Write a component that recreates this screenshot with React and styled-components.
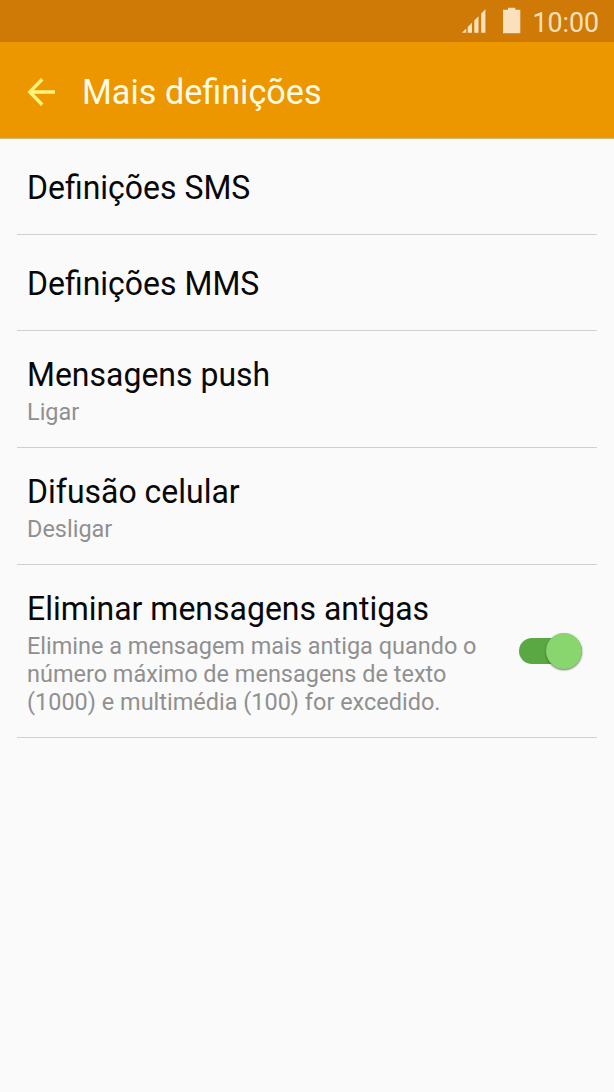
import React from 'react';
import styled, { createGlobalStyle } from 'styled-components';

const Global = createGlobalStyle`
  body { margin: 0; background: #fafafa; }
  * { box-sizing: border-box; }
`;

const Screen = styled.div`
  width: 614px;
  height: 1092px;
  display: flex;
  flex-direction: column;
  overflow: hidden;
  background: #fafafa;
  font-family: Roboto, 'Liberation Sans', sans-serif;
`;

const StatusBar = styled.div`
  flex: none;
  height: 42px;
  padding-right: 15px;
  display: flex;
  justify-content: flex-end;
  background: #cf7a06;
  color: #fae0bd;
`;

const StatusIcons = styled.svg`
  display: block;
  width: 67px;
  height: 42px;
  fill: #fae0bd;
`;

const Clock = styled.span`
  width: 70px;
  font-size: 28px;
  line-height: 45px;
  text-align: right;
  transform: scaleX(0.955);
  transform-origin: right;
`;

const Header = styled.header`
  flex: none;
  height: 97px;
  padding: 3px 0 0 25px;
  display: flex;
  align-items: center;
  background: #ec9600;
  border-bottom: 1px solid #d9b77c;
`;

const BackIcon = styled.svg`
  display: block;
  width: 32px;
  height: 32px;
  margin-right: 25px;
  fill: none;
  stroke: #fff27c;
  stroke-width: 3.4;
`;

const Title = styled.h1`
  margin: 0;
  font-size: 34.2px;
  font-weight: 400;
  line-height: 40px;
  color: #fffbe6;
  white-space: nowrap;
`;

const List = styled.main`
  padding: 0 17px;
`;

const Row = styled.section`
  height: ${(p) => p.$height}px;
  padding: ${(p) => p.$top}px 15.5px 0 10.2px;
  display: flex;
  justify-content: space-between;
  border-bottom: 1px solid #d0d0d0;
`;

const Label = styled.div`
  font-size: 33px;
  line-height: 38px;
  color: #080808;
  white-space: nowrap;
  transform: scaleX(0.969);
  transform-origin: left;
`;

const Detail = styled.div`
  margin-top: 5px;
  font-size: 24px;
  line-height: 28px;
  color: #909090;
  white-space: nowrap;
  transform: translateY(-0.6px) scaleX(0.978);
  transform-origin: left;
`;

const Toggle = styled.div`
  width: 63px;
  height: 26px;
  margin-top: 48px;
  display: flex;
  align-items: center;
  justify-content: flex-end;
  border-radius: 13px;
  background: #5aa843;
`;

const Knob = styled.div`
  flex: none;
  width: 36px;
  height: 36px;
  border-radius: 50%;
  background: #89d66e;
  box-shadow: 0 1px 2px rgba(30, 60, 20, 0.65);
`;

const rows = [
  { label: 'Definições SMS', height: 96, top: 30 },
  { label: 'Definições MMS', height: 96, top: 30 },
  { label: 'Mensagens push', detail: ['Ligar'], height: 117, top: 25 },
  { label: 'Difusão celular', detail: ['Desligar'], height: 117, top: 25 },
  {
    label: 'Eliminar mensagens antigas',
    detail: [
      'Elimine a mensagem mais antiga quando o',
      'número máximo de mensagens de texto',
      '(1000) e multimédia (100) for excedido.',
    ],
    height: 173,
    top: 25,
    on: true,
  },
];

export default function App() {
  return (
    <Screen>
      <Global />
      <StatusBar>
        <StatusIcons viewBox="0 0 67 42">
          <path d="M0 32.8l4.2-4.2v4.2zM5.7 27l4.3-4.3v10.1H5.7zM12.3 20.4l4.2-4.2v16.6h-4.2zM19.2 13.5l4.2-4.3v23.6h-4.2z" />
          <path d="M41 9.8h5V7.8h7.3v2h5v23.5H41z" />
        </StatusIcons>
        <Clock>10:00</Clock>
      </StatusBar>
      <Header>
        <BackIcon viewBox="0 0 32 32">
          <path d="M17.2 3.2 4.8 16l12.4 12.8M4.8 16H30" />
        </BackIcon>
        <Title>Mais definições</Title>
      </Header>
      <List>
        {rows.map((row) => (
          <Row key={row.label} $height={row.height} $top={row.top}>
            <div>
              <Label>{row.label}</Label>
              {row.detail && (
                <Detail>
                  {row.detail.map((line) => (
                    <div key={line}>{line}</div>
                  ))}
                </Detail>
              )}
            </div>
            {row.on && (
              <Toggle role="switch" aria-checked="true">
                <Knob />
              </Toggle>
            )}
          </Row>
        ))}
      </List>
    </Screen>
  );
}
